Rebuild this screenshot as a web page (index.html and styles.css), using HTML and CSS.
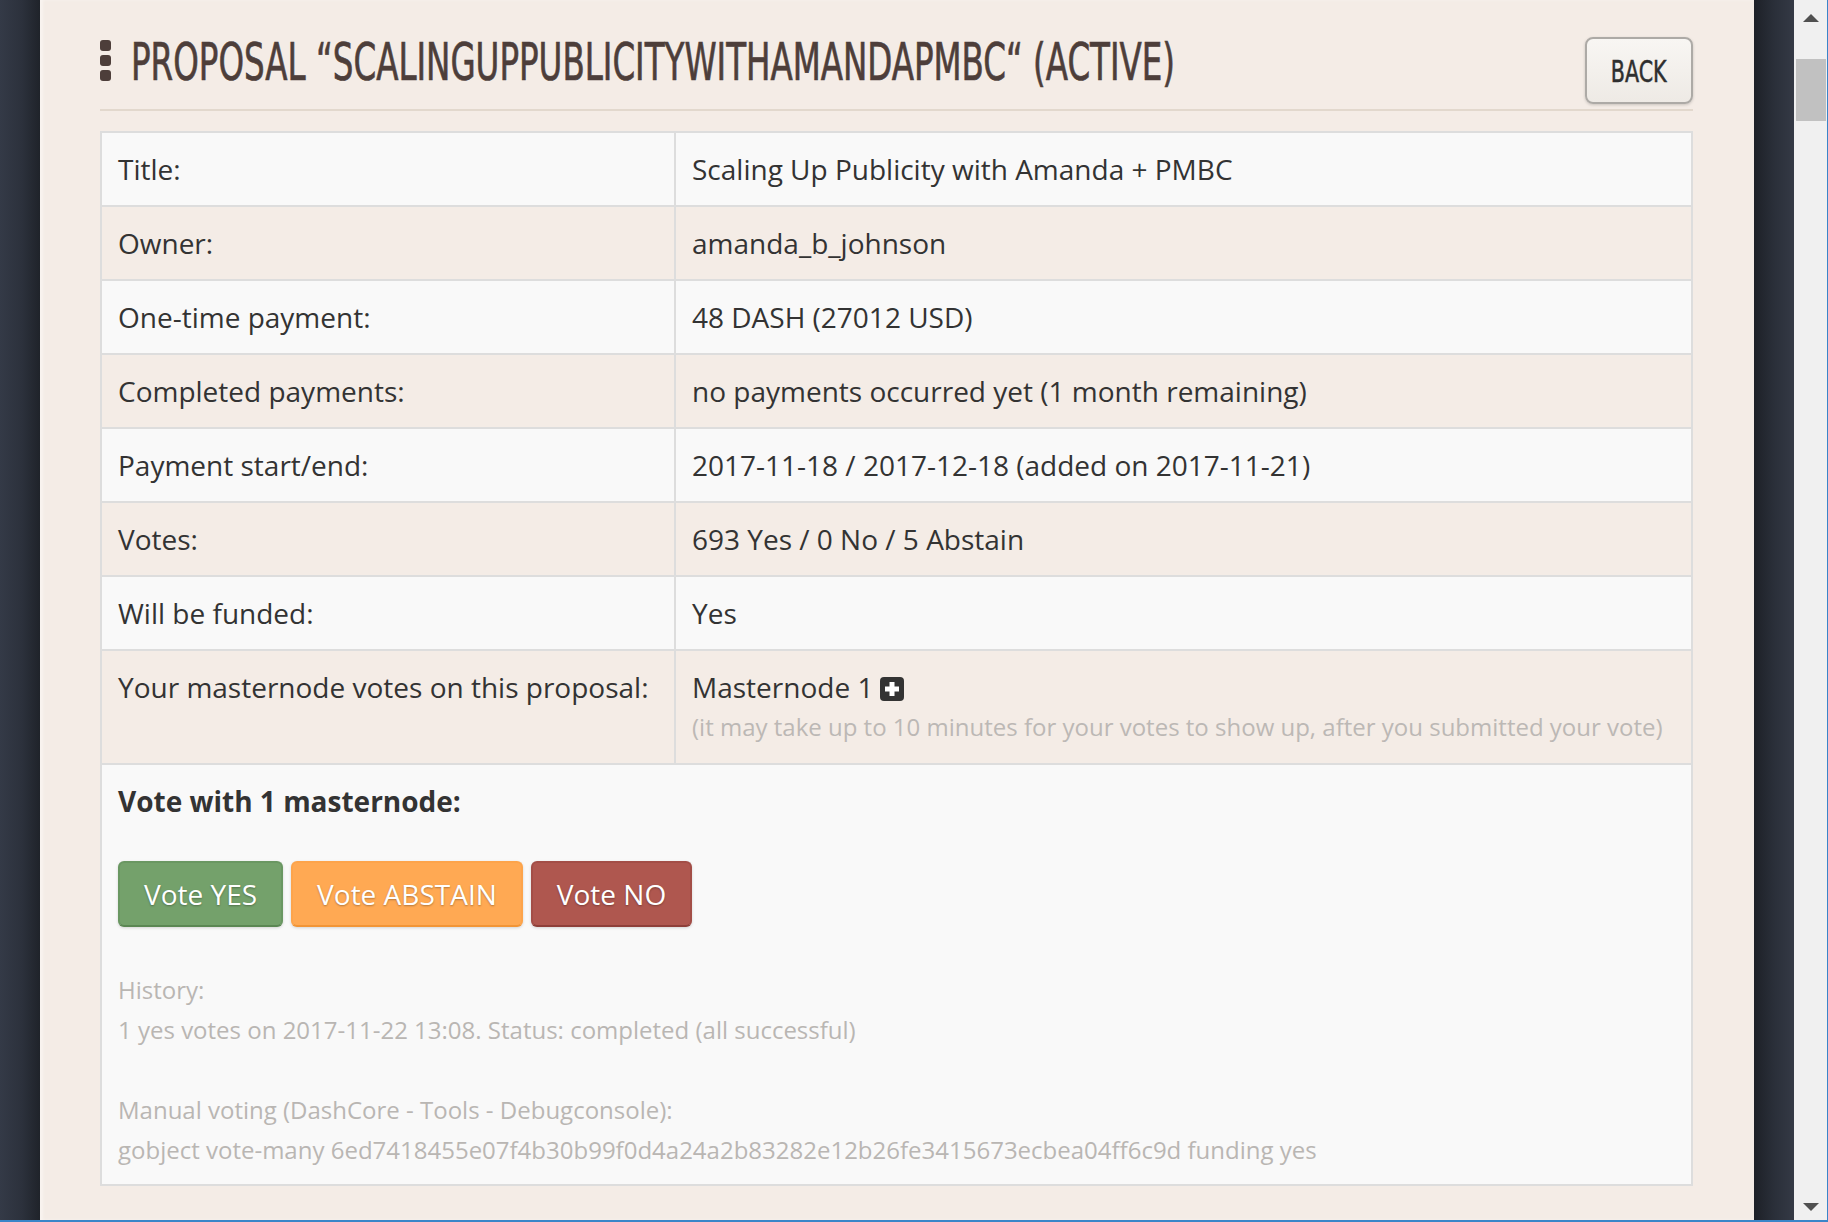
FILE: index.html
```html
<!DOCTYPE html>
<html lang="en">
<head>
<meta charset="utf-8">
<title>Proposal</title>
<link rel="stylesheet" href="styles.css">
</head>
<body>
<div class="screen">
  <div class="rail rail-left"></div>
  <main class="panel">
    <header class="header">
      <h1 class="heading">
        <span class="dots"><i></i><i></i><i></i></span>
        <span class="heading-box"><span class="heading-text">PROPOSAL “SCALINGUPPUBLICITYWITHAMANDAPMBC“ (ACTIVE)</span></span>
      </h1>
      <button class="back"><span>BACK</span></button>
    </header>
    <table class="details">
      <colgroup><col class="c1"><col></colgroup>
      <tbody>
        <tr><td>Title:</td><td>Scaling Up Publicity with Amanda + PMBC</td></tr>
        <tr><td>Owner:</td><td>amanda_b_johnson</td></tr>
        <tr><td>One-time payment:</td><td>48 DASH (27012 USD)</td></tr>
        <tr><td>Completed payments:</td><td>no payments occurred yet (1 month remaining)</td></tr>
        <tr><td>Payment start/end:</td><td>2017-11-18 / 2017-12-18 (added on 2017-11-21)</td></tr>
        <tr><td>Votes:</td><td>693 Yes / 0 No / 5 Abstain</td></tr>
        <tr><td>Will be funded:</td><td>Yes</td></tr>
        <tr><td>Your masternode votes on this proposal:</td><td>Masternode 1 <svg class="plus" width="24" height="24" viewBox="0 0 24 24"><rect width="24" height="24" rx="4" fill="#333"/><path d="M9.5 5h5v4.5H19v5h-4.5V19h-5v-4.5H5v-5h4.5z" fill="#fff"/></svg><span class="note">(it may take up to 10 minutes for your votes to show up, after you submitted your vote)</span></td></tr>
        <tr><td colspan="2" class="vote-cell">
          <p class="vote-title">Vote with 1 masternode:</p>
          <div class="vote-buttons">
            <button class="btn btn-yes">Vote YES</button>
            <button class="btn btn-abstain">Vote ABSTAIN</button>
            <button class="btn btn-no">Vote NO</button>
          </div>
          <div class="history">
            <div>History:</div>
            <div>1 yes votes on 2017-11-22 13:08. Status: completed (all successful)</div>
            <div class="blank"></div>
            <div>Manual voting (DashCore - Tools - Debugconsole):</div>
            <div>gobject vote-many 6ed7418455e07f4b30b99f0d4a24a2b83282e12b26fe3415673ecbea04ff6c9d funding yes</div>
          </div>
        </td></tr>
      </tbody>
    </table>
  </main>
  <div class="rail rail-right"></div>
  <div class="scrollbar">
    <span class="arrow-up"></span>
    <span class="thumb"></span>
    <span class="track"></span>
    <span class="arrow-down"></span>
  </div>
</div>
</body>
</html>
```
FILE: styles.css
```css
* { box-sizing: border-box; }
html, body { margin: 0; padding: 0; }
body {
  background: #272b34;
  font-family: "Open Sans", "Liberation Sans", sans-serif;
  color: #333;
  overflow: hidden;
}
.screen {
  display: flex;
  height: 1222px;
  border-bottom: 2px solid #3a85c9;
  border-right: 1px solid #3a85c9;
}
.rail { width: 40px; flex: none; }
.rail-left {
  background: linear-gradient(90deg, #343a47 0%, #2c313c 55%, #1f232a 100%);
}
.rail-right {
  background: linear-gradient(90deg, #1d2027 0%, #2a2f39 50%, #343945 100%);
}
.panel {
  flex: 1 1 0;
  min-width: 0;
  overflow: hidden;
  background: #f4ece6;
  padding: 0 61px 0 60px;
  box-shadow: inset 3px 0 3px rgba(255,255,255,0.4);
}
.header {
  display: flex;
  justify-content: space-between;
  align-items: flex-start;
  padding-top: 36px;
  padding-bottom: 5px;
  border-bottom: 2px solid #e2d8cd;
}
.heading {
  margin: 0;
  display: flex;
  align-items: flex-start;
  min-width: 0;
  font-family: "DejaVu Sans Condensed", "Liberation Sans Narrow", "Liberation Sans", sans-serif;
  font-weight: 400;
  font-size: 52px;
  line-height: 53px;
  color: #4d3e3a;
  white-space: nowrap;
}
.dots {
  display: flex;
  flex-direction: column;
  gap: 4px;
  margin-top: 4px;
  margin-right: 20px;
  flex: none;
}
.dots i {
  display: block;
  width: 11px;
  height: 11px;
  border-radius: 3px;
  background: #4d3e3a;
}
.heading-box {
  width: 1040px;
}
.heading-text {
  display: inline-block;
  transform: scaleX(0.695);
  transform-origin: left center;
  -webkit-text-stroke: 0.7px #4d3e3a;
}
.back {
  flex: none;
  margin-top: 1px;
  width: 108px;
  height: 67px;
  border: 2px solid #adaaa6;
  border-radius: 8px;
  background: linear-gradient(#f8f6f3, #eeeae5);
  box-shadow: 0 1px 3px rgba(0,0,0,0.18);
  padding: 0;
  font-family: "DejaVu Sans Condensed", "Liberation Sans Narrow", "Liberation Sans", sans-serif;
  font-size: 31px;
  color: #2f2f2f;
  display: flex;
  align-items: center;
  justify-content: center;
}
.back span {
  display: inline-block;
  transform: scaleX(0.74);
  -webkit-text-stroke: 0.5px #2f2f2f;
}
.details {
  margin-top: 20px;
  width: 100%;
  border-collapse: collapse;
  table-layout: fixed;
  border: 2px solid #dddddd;
}
.c1 { width: 574px; }
.details td {
  border: 2px solid #dddddd;
  padding: 16px 16px;
  font-size: 28px;
  line-height: 40px;
  vertical-align: top;
  color: #333;
  white-space: nowrap;
}
.details tr:nth-child(odd) td { background: #f9f9f9; }
.details tr:nth-child(even) td { background: #f4ece6; }
.plus { vertical-align: -3px; margin-left: -1px; }
.note {
  display: block;
  font-size: 24px;
  line-height: 40px;
  color: #bcb8b5;
}
.details td.vote-cell { padding-bottom: 14px; }
.vote-title {
  margin: 0;
  font-weight: 700;
  font-size: 28px;
  line-height: 40px;
}
.vote-buttons {
  display: flex;
  gap: 8px;
  margin-top: 40px;
}
.btn {
  font-family: "Open Sans", sans-serif;
  font-size: 28px;
  line-height: 40px;
  padding: 11px 24px;
  border: 2px solid;
  border-radius: 6px;
  color: #fff;
  text-shadow: 0 1px 2px rgba(0,0,0,0.3);
  box-shadow: 0 1px 3px rgba(0,0,0,0.15);
}
.btn-yes { background: #74a16b; border-color: #6a9762 #6a9762 #5b8753; }
.btn-abstain { background: #ffa953; border-color: #fda44b #fda44b #f29536; }
.btn-no { background: #af574f; border-color: #a34e47 #a34e47 #8e3f39; }
.history {
  margin-top: 43px;
  font-size: 24px;
  line-height: 40px;
  color: #b9b6b3;
}
.blank { height: 40px; }
.scrollbar {
  width: 33px;
  flex: none;
  background: #f0f0f0;
  display: flex;
  flex-direction: column;
  align-items: center;
}
.arrow-up {
  margin-top: 14px;
  width: 0; height: 0;
  border-left: 8px solid transparent;
  border-right: 8px solid transparent;
  border-bottom: 8px solid #505050;
}
.thumb {
  margin-top: 37px;
  width: 30px;
  height: 62px;
  background: #c1c1c1;
  margin-left: 1px;
}
.track { flex: 1; }
.arrow-down {
  margin-bottom: 9px;
  width: 0; height: 0;
  border-left: 8px solid transparent;
  border-right: 8px solid transparent;
  border-top: 8px solid #505050;
}
```
